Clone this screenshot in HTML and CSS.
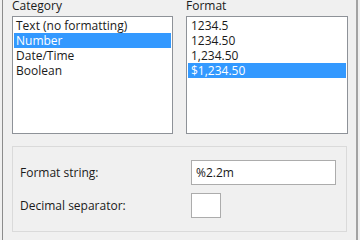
FILE: index.html
```html
<!DOCTYPE html>
<html>
<head>
<meta charset="utf-8">
<link rel="stylesheet" href="styles.css">
</head>
<body>
<div class="frame">
  <div class="panes">
    <div class="pane pane-cat">
      <div class="label">Category</div>
      <div class="list">
        <div class="item">Text (no formatting)</div>
        <div class="item selected">Number</div>
        <div class="item">Date/Time</div>
        <div class="item">Boolean</div>
      </div>
    </div>
    <div class="pane pane-fmt">
      <div class="label">Format</div>
      <div class="list">
        <div class="item">1234.5</div>
        <div class="item">1234.50</div>
        <div class="item">1,234.50</div>
        <div class="item selected">$1,234.50</div>
      </div>
    </div>
  </div>
  <div class="group">
    <div class="field-label">Format string:</div>
    <div class="input wide">%2.2m</div>
    <div class="field-label">Decimal separator:</div>
    <div class="input small"></div>
  </div>
</div>
</body>
</html>
```
FILE: styles.css
```css
html, body {
  margin: 0;
  padding: 0;
  background: #f0f0f0;
  font-family: "Open Sans", "Liberation Sans", Arial, sans-serif;
  font-size: 12px;
  color: #000;
}
.frame {
  box-sizing: border-box;
  width: 356px;
  height: 240px;
  margin-left: 2px;
  border-left: 1px solid #8c8c8c;
  border-right: 2px solid #a3a3a3;
  padding-left: 9px;
  overflow: hidden;
}
.panes {
  display: flex;
  gap: 13px;
}
.pane {
  display: flex;
  flex-direction: column;
}
.pane-cat { width: 161px; }
.pane-fmt { width: 162px; }
.label {
  line-height: 15px;
  height: 15px;
  margin-top: -2px;
  color: #1a1a1a;
}
.list {
  box-sizing: border-box;
  margin-top: 3px;
  height: 118px;
  border: 1px solid #8e9298;
  background: #fff;
  padding: 1px;
}
.item {
  box-sizing: border-box;
  height: 15px;
  line-height: 14px;
  padding: 1px 0 0 2px;
  white-space: nowrap;
  color: #1a1a1a;
}
.pane-fmt .item { padding-left: 3px; }
.item.selected {
  background: #3399ff;
  color: #fff;
}
.group {
  box-sizing: border-box;
  width: 335px;
  height: 86px;
  margin-top: 12px;
  border: 1px solid #dadada;
  padding: 13px 0 0 7px;
  display: grid;
  grid-template-columns: 171px auto;
  row-gap: 8px;
  align-items: center;
  align-content: start;
}
.field-label {
  line-height: 15px;
  color: #1a1a1a;
}
.input {
  box-sizing: border-box;
  height: 25px;
  border: 1px solid #acacac;
  background: #fff;
  line-height: 23px;
  padding-left: 4px;
  color: #1a1a1a;
}
.input.wide { width: 145px; }
.input.small { width: 30px; }
```
